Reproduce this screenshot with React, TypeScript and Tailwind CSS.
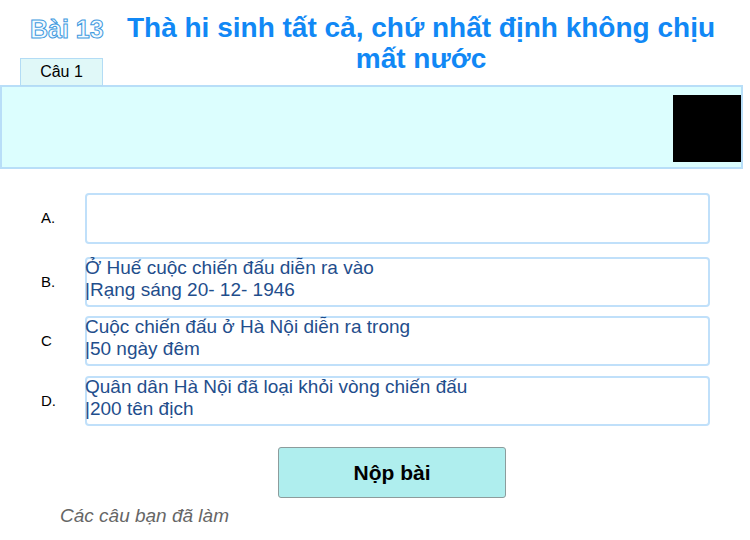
const font = { fontFamily: '"Liberation Sans", Arial, sans-serif' };

const options = [
  { label: "A.", lines: [] as string[], h: "h-[51px]", mt: "mt-0" },
  { label: "B.", lines: ["Ở Huế cuộc chiến đấu diễn ra vào", "|Rạng sáng 20- 12- 1946"], h: "h-[50px]", mt: "mt-[13px]" },
  { label: "C", lines: ["Cuộc chiến đấu ở Hà Nội diễn ra trong", "|50 ngày đêm"], h: "h-[50px]", mt: "mt-[9px]" },
  { label: "D.", lines: ["Quân dân Hà Nội đã loại khỏi vòng chiến đấu", "|200 tên địch"], h: "h-[50px]", mt: "mt-[10px]" },
];

function AnswerRow({ label, lines, h, mt }: (typeof options)[number]) {
  return (
    <div className={`flex items-center ${mt}`}>
      <div className="w-[85px] pl-[41px] text-[15px] text-black">{label}</div>
      <div className={`${h} w-[625px] rounded-[4px] border-2 border-[#c0e0fa] bg-white`}>
        <div className="-ml-[2px] -mt-[2px] text-[19px] leading-[22px] text-[#1f4e8c]">
          {lines.map((l) => (
            <div key={l} className="whitespace-nowrap">{l}</div>
          ))}
        </div>
      </div>
    </div>
  );
}

export default function App() {
  return (
    <div className="flex h-[540px] w-[750px] flex-col overflow-hidden bg-white" style={font}>
      {/* header */}
      <div className="flex items-start pt-[12px]">
        <div className="flex w-[121px] flex-col items-start pl-[20px]">
          <div className="ml-[10px] mt-[3px] text-[25px] font-bold leading-[28px] text-[#f4fbff] [-webkit-text-stroke:1px_#3f9ae0]">
            Bài 13
          </div>
          <div className="relative z-10 -mb-px mt-[15px] flex h-[28px] w-[83px] items-center justify-center border border-[#b3dcf5] bg-[#e0f8f8] text-[16px] text-black">
            Câu 1
          </div>
        </div>
        <h1 className="w-[600px] text-center text-[28px] font-bold leading-[31px] text-[#1188f5]">
          Thà hi sinh tất cả, chứ nhất định không chịu mất nước
        </h1>
      </div>

      {/* question box */}
      <div className="flex h-[84px] w-[743px] items-start justify-end border-2 border-[#b8def8] bg-[#dcfefe] pt-[8px]">
        <div className="h-[67px] w-[68px] bg-black" />
      </div>

      {/* answers */}
      <div className="mt-[24px] flex flex-col">
        {options.map((o) => (
          <AnswerRow key={o.label} {...o} />
        ))}
      </div>

      <button className="ml-[278px] mt-[21px] flex h-[51px] w-[228px] items-center justify-center rounded-[3px] border border-[#8d9c9c] bg-[#afeeee] text-[21px] font-bold text-black">
        Nộp bài
      </button>

      <div className="ml-[60px] mt-[7px] text-[19px] italic leading-[22px] text-[#666666]">Các câu bạn đã làm</div>
    </div>
  );
}
